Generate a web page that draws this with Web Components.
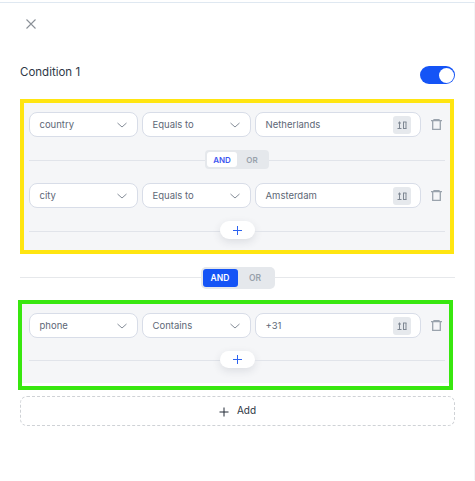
<!DOCTYPE html>
<html><head><meta charset="utf-8">
<style>html,body{margin:0;padding:0;background:#fff}body{font-family:Inter,"Liberation Sans",sans-serif}</style>
</head><body>
<rule-panel>
  <panel-header slot="header" title="Condition 1"></panel-header>
  <cond-group color="#ffe511" style="margin:0 1px 0 0;--pl:5px;--pr:5px;--bg:#f5f6f8">
    <cond-row field="country" op="Equals to" value="Netherlands"></cond-row>
    <logic-divider kind="small"></logic-divider>
    <cond-row field="city" op="Equals to" value="Amsterdam"></cond-row>
    <plus-divider style="--ph:18px;--lm:3px;--mb:11px"></plus-divider>
  </cond-group>
  <logic-divider kind="big"></logic-divider>
  <cond-group color="#38e70f" style="margin:0 2px 0 -2px;--pl:7px;--pr:4px;--bg:linear-gradient(#f5f6f8 calc(100% - 3px),#fff 0)">
    <cond-row field="phone" op="Contains" value="+31"></cond-row>
    <plus-divider style="--ph:17px;--lm:2px;--mb:18px"></plus-divider>
  </cond-group>
  <add-button></add-button>
</rule-panel>
<script>
function def(name, html){
  customElements.define(name, class extends HTMLElement{
    constructor(){super();this.attachShadow({mode:'open'});}
    connectedCallback(){
      const a=n=>(this.getAttribute(n)||'');
      this.shadowRoot.innerHTML=typeof html==='function'?html(a):html;
    }
  });
}
def('rule-panel',`<style>
:host{display:block;width:475px;height:478px;box-sizing:border-box;border-top:1px solid #dfe8f1;margin-top:2px;border-right:1px solid #f3f5f7;padding:0 19px 0 20px;overflow:hidden;color:#2e3a4a}
</style><slot name="header"></slot><slot></slot>`);
def('panel-header',a=>`<style>
:host{display:block}
.x{display:block;margin:0 0 0 6px;padding-top:16px;height:10px}
.t{display:flex;justify-content:space-between;align-items:center;margin-top:37px;height:18px;margin-bottom:15px}
span{font:400 11.5px/18px Inter,sans-serif;color:#2f3947;margin-bottom:6px}
.sw{width:35px;height:18px;border-radius:9px;background:#1554f6;display:flex;justify-content:flex-end;align-items:center;padding-right:1.5px;box-sizing:border-box}
.sw i{display:block;width:15px;height:15px;border-radius:50%;background:#fff}
</style>
<div class="x"><svg width="10" height="10" viewBox="0 0 10 10" style="display:block"><path d="M.5.5l9 9M9.5.5l-9 9" stroke="#8a9097" stroke-width="1.1" fill="none"/></svg></div>
<div class="t"><span>${a('title')}</span><div class="sw"><i></i></div></div>`);
def('cond-group',a=>`<style>
:host{display:block;box-sizing:border-box;border:4px solid ${a('color')};background:var(--bg);padding:9px var(--pr) 0 var(--pl)}
</style><slot></slot>`);
def('cond-row',a=>`<style>
:host{display:flex;align-items:center;height:25px}
.g{display:flex;gap:4px;flex:none}
.tr{margin:-1px 0 0 9.5px;width:11px;height:11px;flex:none}
</style><div class="g"><select-box w="109" label="${a('field')}"></select-box><select-box w="109" label="${a('op')}"></select-box><value-box label="${a('value')}"></value-box></div>
<svg class="tr" viewBox="0 0 11 11"><path d="M3 1V.5h5V1M0 1.6h11M1.7 2v8.3h7.6V2" fill="none" stroke="#9aa3ad" stroke-width="1.3"/></svg>`);
const box=`box-sizing:border-box;height:25px;background:#fff;border:1px solid #d8dde8;border-radius:8px;display:flex;align-items:center;font:400 9.5px/1 Inter,sans-serif;color:#5d6776;`;
def('select-box',a=>`<style>
:host{${box}width:${a('w')}px;padding:0 10px 0 9.5px;justify-content:space-between}
</style><span>${a('label')}</span><svg width="10" height="6" viewBox="0 0 10 6"><path d="M.5 1L5 5l4.5-4" fill="none" stroke="#858d98" stroke-width="1"/></svg>`);
def('value-box',a=>`<style>
:host{${box}width:166px;padding:0 9px 0 9.5px;justify-content:space-between}
.i{width:18px;height:18px;background:#e6e9ed;border-radius:3px;display:flex;align-items:center;justify-content:center}
</style><span>${a('label')}</span><div class="i"><svg width="10" height="8" viewBox="0 0 10 8"><path d="M2.5.5v7M1 2h3M.5 7.5h4M6.5 1v6.5M9 1v6.5M6 7.5h3.5M6 1h3.5" fill="none" stroke="#7e8792" stroke-width="1"/></svg></div>`);
def('logic-divider',a=>{const big=a('kind')==='big';return `<style>
:host{display:flex;align-items:center;height:${big?22:19}px;margin:${big?'13px 0 11px':'13px 0 14px'}}
i{flex:1;height:1px;background:${big?'#e6e8eb':'#e1e4ea'};${big?'margin-bottom:1px':'margin-top:2px'}}
.s{display:flex;width:${big?74:64}px;height:100%;box-sizing:border-box;background:#e5e8ec;border-radius:${big?5:4}px;padding:2px;font:600 ${big?8.5:8}px/1 Inter,sans-serif}
b{font-weight:600;flex:1;display:flex;align-items:center;justify-content:center;border-radius:3px}
.a{${big?'background:#1554f6;color:#fff':'background:#fff;color:#3d56f0'};flex:none;width:${big?35:30}px}
.o{color:#98a1ab}
</style><i></i><div class="s"><b class="a">AND</b><b class="o">OR</b></div><i></i>`});
def('plus-divider',`<style>
:host{display:flex;align-items:center;height:var(--ph);margin:13px 0 var(--mb)}
i{flex:1;height:1px;background:#e1e4ea;margin-top:var(--lm)}
.p{width:35px;height:100%;border-radius:9px;background:#fff;box-shadow:0 3px 8px rgba(40,50,70,.12);display:flex;align-items:center;justify-content:center}
</style><i></i><div class="p"><svg width="9" height="9" viewBox="0 0 9 9"><path d="M4.5 0v9M0 4.5h9" stroke="#2d63f0" stroke-width="1"/></svg></div><i></i>`);
def('add-button',`<style>
:host{display:flex;align-items:center;justify-content:center;gap:8px;box-sizing:border-box;height:30px;margin-top:6px;border:1px dashed #cfd2d6;border-radius:7px;font:400 10px/1 Inter,sans-serif;color:#2d3744}
svg{margin-top:1px}
span{margin-bottom:2px}
</style><svg width="10" height="10" viewBox="0 0 10 10"><path d="M5 .5v9M.5 5h9" stroke="#232b36" stroke-width="1"/></svg><span>Add</span>`);
</script>
</body></html>
